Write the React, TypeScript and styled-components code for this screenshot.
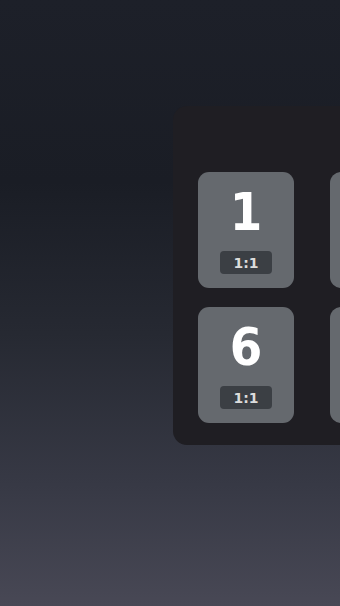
import React from "react";
import styled, { createGlobalStyle } from "styled-components";

const GlobalStyle = createGlobalStyle`
	html, body {
		margin: 0;
		padding: 0;
		height: 100%;
	}
	body {
		background: linear-gradient(180deg, #1d2029 0%, #1a1d25 30%, #262932 55%, #373945 80%, #484855 100%);
		font-family: "DejaVu Sans", "Liberation Sans", sans-serif;
		overflow: hidden;
	}
	#root {
		height: 100%;
	}
`;

type Tile = { id: number; ratio: string };

const tiles: Tile[] = Array.from({ length: 10 }, (_, i) => ({
	id: i + 1,
	ratio: "1:1",
}));

const App: React.FC = () => {
	return (
		<>
			<GlobalStyle />
			<Page>
				<Panel>
					<Grid>
						{tiles.map(({ id, ratio }) => (
							<Card key={id}>
								<Num>{id}</Num>
								<Badge>{ratio}</Badge>
							</Card>
						))}
					</Grid>
				</Panel>
			</Page>
		</>
	);
};

export default App;

const Page = styled.div`
	height: 100%;
	padding: 106px 0 0 173px;
	box-sizing: border-box;
	overflow: hidden;
`;

const Panel = styled.div`
	width: max-content;
	background: #1f1e23;
	border-radius: 14px;
	padding: 66px 25px 22px 25px;
`;

const Grid = styled.div`
	display: grid;
	grid-template-columns: repeat(5, 96px);
	column-gap: 36px;
	row-gap: 19px;
`;

const Card = styled.div`
	width: 96px;
	height: 116px;
	box-sizing: border-box;
	border-radius: 11px;
	background: #65696e;
	display: flex;
	flex-direction: column;
	align-items: center;
	padding-top: 12px;
`;

const Num = styled.div`
	color: #ffffff;
	font-family: "DejaVu Sans Condensed", "DejaVu Sans", sans-serif;
	font-size: 52px;
	font-weight: 700;
	line-height: 56px;
`;

const Badge = styled.div`
	margin-top: 11px;
	width: 52px;
	height: 23px;
	border-radius: 4px;
	background: #3b3f44;
	color: #dcdcdc;
	font-size: 14px;
	font-weight: 700;
	display: flex;
	align-items: center;
	justify-content: center;
`;
